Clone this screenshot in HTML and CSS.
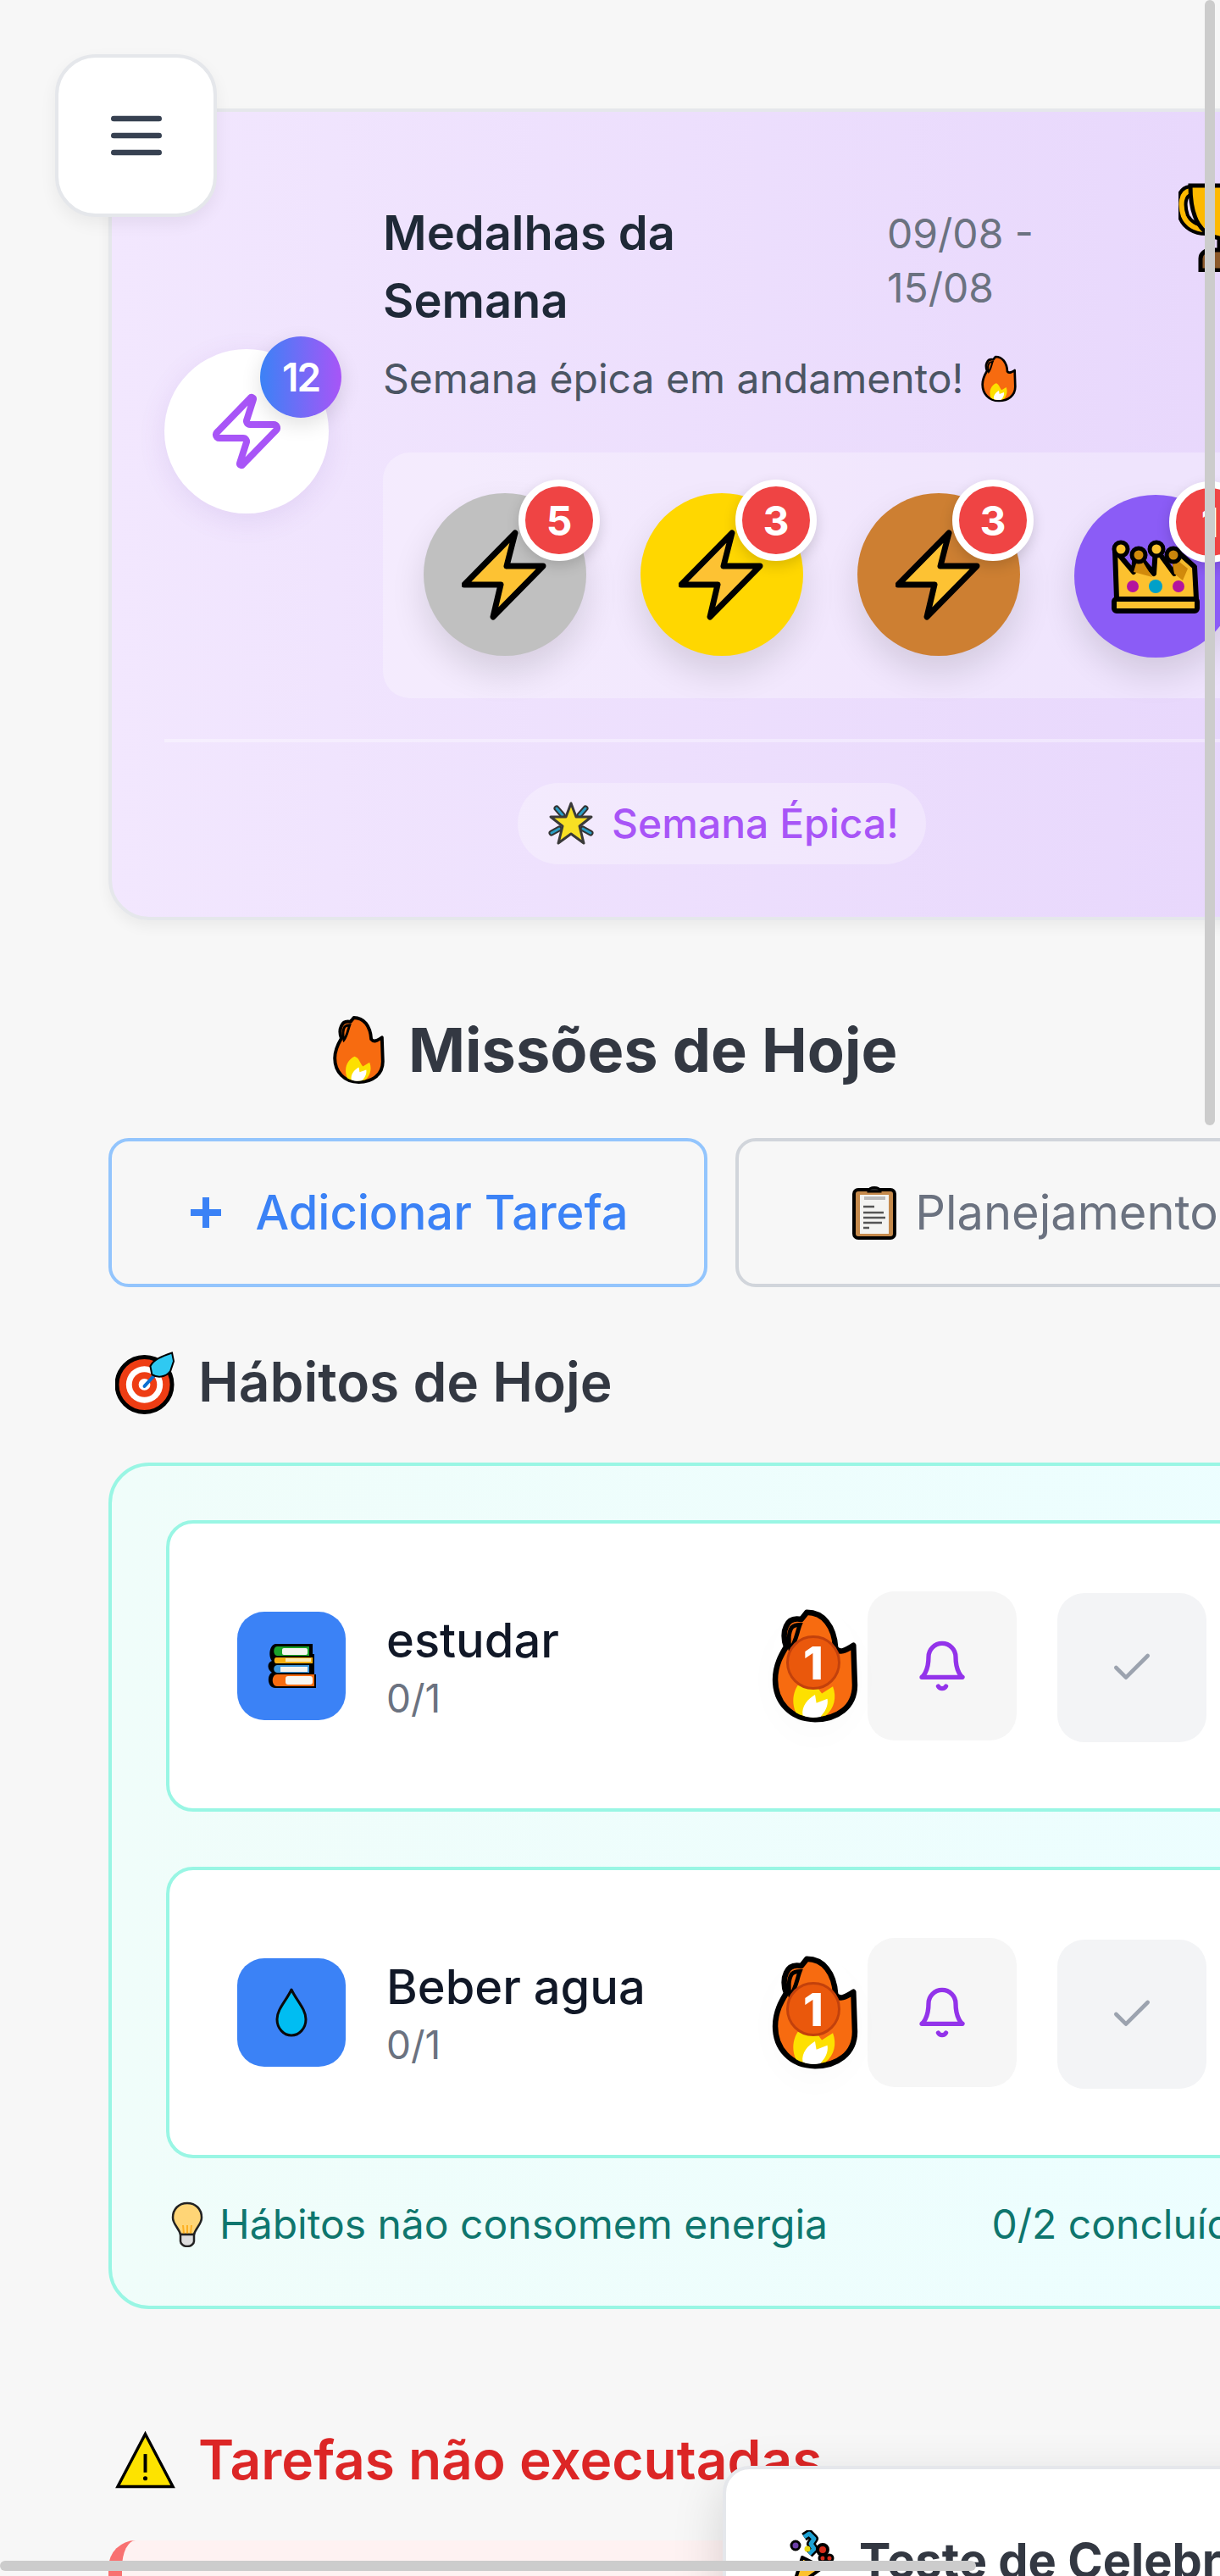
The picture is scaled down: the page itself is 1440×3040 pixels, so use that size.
FILE: index.html
```html
<!DOCTYPE html>
<html lang="pt-BR">
<head>
    <meta charset="UTF-8">
    <meta name="viewport" content="width=device-width, initial-scale=1.0">
    <title>Missões de Hoje</title>
    <link rel="stylesheet" href="styles.css">
</head>
<body>
    <svg class="sprite" aria-hidden="true">
        <symbol id="fire" viewBox="0 0 64 84">
            <path d="M26 3C38 3 46 13 47 29C50 33 54 31 60 27L61 56C61 72 48 81 32 81C14 81 3 68 3 52C3 41 8 33 11 28C9 23 9 17 11 13C13 8 17 7 22 8Z" fill="#f76b10" stroke="#000" stroke-width="4" stroke-linejoin="round"/>
            <path d="M14 30C12 24 13 17 15 14C17 12 19 12 21 12C19 17 18 25 14 30Z" fill="#f76b10" stroke="#000" stroke-width="3"/>
            <path d="M18 76C13 64 19 53 27 50C33 52 33 58 37 62L45 57C48 65 46 73 40 78C33 80 24 80 18 76Z" fill="#fde000"/>
            <path d="M23 78C22 71 27 66 32 63L33 69L41 66C42 71 39 76 36 79C32 80 27 80 23 78Z" fill="#fff"/>
        </symbol>
        <symbol id="bolt" viewBox="0 0 100 108">
            <path d="M63 5L53 44H96L37 104L46 66H3Z" fill="#fdc233" stroke="#000" stroke-width="7" stroke-linejoin="round"/>
        </symbol>
        <symbol id="trophy" viewBox="0 0 110 110">
            <path d="M14 14C2 16 2 32 6 44C10 54 20 60 32 60" fill="none" stroke="#000" stroke-width="14"/>
            <path d="M14 14C2 16 2 32 6 44C10 54 20 60 32 60" fill="none" stroke="#fdb900" stroke-width="6"/>
            <path d="M14 8H96C96 50 82 66 62 70V84H48V70C28 66 14 50 14 8Z" fill="#fdb900" stroke="#000" stroke-width="5"/>
            <path d="M26 108V94C26 88 32 84 38 84H72C78 84 84 88 84 94V108Z" fill="#8c5a2b" stroke="#000" stroke-width="5"/>
        </symbol>
        <symbol id="crown" viewBox="0 0 108 90">
            <path d="M8 72L6 14L28 40L30 16L52 42L54 12L76 42L80 16L100 34L102 72Z" fill="#fcc12f" stroke="#000" stroke-width="6" stroke-linejoin="round"/>
            <path d="M28 40L34 20L50 46ZM76 42L72 20L92 36L86 50Z" fill="#d18a0c"/>
            <circle cx="13" cy="13" r="8" fill="#fcc12f" stroke="#000" stroke-width="5"/>
            <circle cx="34" cy="20" r="8" fill="#d18a0c" stroke="#000" stroke-width="5"/>
            <circle cx="55" cy="13" r="8" fill="#fcc12f" stroke="#000" stroke-width="5"/>
            <circle cx="75" cy="20" r="8" fill="#d18a0c" stroke="#000" stroke-width="5"/>
            <circle cx="27" cy="57" r="7" fill="#b4149e"/>
            <circle cx="54" cy="57" r="8" fill="#00a0c8"/>
            <circle cx="81" cy="57" r="7" fill="#b4149e"/>
            <rect x="5" y="72" width="98" height="14" rx="3" fill="#fcc12f" stroke="#000" stroke-width="6"/>
        </symbol>
        <symbol id="star" viewBox="0 0 54 54">
            <path d="M10 9L17 17M44 9L37 17M4 38L13 33M50 38L41 33" stroke="#333" stroke-width="7" stroke-linecap="round"/>
            <path d="M10 9L17 17M44 9L37 17M4 38L13 33M50 38L41 33" stroke="#2a9dc4" stroke-width="3" stroke-linecap="round"/>
            <path d="M27 3L33 19H51L37 30L42 50L27 39L12 50L17 30L3 19H21Z" fill="#f8e023" stroke="#3a3a3a" stroke-width="3" stroke-linejoin="round"/>
        </symbol>
        <symbol id="clipboard" viewBox="0 0 54 66">
            <rect x="3" y="6" width="48" height="57" rx="5" fill="#c58a4c" stroke="#000" stroke-width="4"/>
            <rect x="10" y="12" width="34" height="46" fill="#f4f4f2"/>
            <path d="M20 8H34C34 2 20 2 20 8Z" fill="#333" stroke="#000" stroke-width="3"/>
            <path d="M15 16H40" stroke="#bbb" stroke-width="4"/>
            <path d="M14 26H27M14 33H38M14 39H40M14 45H36M14 51H21" stroke="#555" stroke-width="2.5"/>
        </symbol>
        <symbol id="target" viewBox="0 0 72 80">
            <circle cx="35" cy="43" r="33" fill="#ee3d14" stroke="#000" stroke-width="5"/>
            <circle cx="35" cy="43" r="22" fill="#fff"/>
            <circle cx="35" cy="43" r="15" fill="#ee3d14"/>
            <circle cx="35" cy="43" r="7" fill="#fff"/>
            <path d="M35 45L56 22" stroke="#0a6fd0" stroke-width="4" stroke-linecap="round"/>
            <path d="M42 21C46 13 56 9 68 5L70 15L66 27C60 35 50 35 44 31Z" fill="#2fc9f2" stroke="#000" stroke-width="2"/>
        </symbol>
        <symbol id="books" viewBox="0 0 58 56">
            <path d="M10 2H54V14H56V38H58V54H10C0 54 0 38 6 36C0 32 0 24 6 22C2 18 2 4 10 2Z" fill="#000"/>
            <path d="M12 5H50V16H12C7 16 7 5 12 5Z" fill="#1aa32a"/>
            <rect x="18" y="7" width="30" height="8" rx="2" fill="#f4f4f0"/>
            <path d="M11 18H54V25H11C8 25 8 18 11 18Z" fill="#f6ae11"/>
            <rect x="22" y="19" width="30" height="4" fill="#f9e9b9"/>
            <path d="M12 27H50V36H12C7 36 7 27 12 27Z" fill="#3b96dc"/>
            <rect x="16" y="29" width="32" height="6" fill="#f4f4f0"/>
            <path d="M12 38H56V52H12C5 52 5 38 12 38Z" fill="#f76b10"/>
            <rect x="22" y="40" width="32" height="10" rx="3" fill="#f7f7f2"/>
        </symbol>
        <symbol id="drop" viewBox="0 0 40 60">
            <path d="M20 3C26 16 37 26 37 38C37 49 29 57 20 57C11 57 3 49 3 38C3 26 14 16 20 3Z" fill="#00bdf2" stroke="#0a0a0a" stroke-width="3" stroke-linejoin="round"/>
        </symbol>
        <symbol id="bulb" viewBox="0 0 38 54">
            <path d="M19 2C9 2 2 9 2 19C2 27 9 31 11 39H27C29 31 36 27 36 19C36 9 29 2 19 2Z" fill="#ffd576" stroke="#222" stroke-width="2.5"/>
            <path d="M15 38L14 28M23 38L24 28M19 38V28" stroke="#fdb022" stroke-width="2"/>
            <path d="M11 39H27V47C27 50 23 53 19 53C15 53 11 50 11 47Z" fill="#ddd" stroke="#222" stroke-width="2.5"/>
        </symbol>
        <symbol id="warning" viewBox="0 0 72 70">
            <path d="M36 4L69 67H3Z" fill="#fde300" stroke="#000" stroke-width="3.5" stroke-linejoin="miter"/>
            <path d="M36 28V50" stroke="#000" stroke-width="4"/>
            <circle cx="36" cy="57" r="2.6" fill="#000"/>
        </symbol>
        <symbol id="popper" viewBox="0 0 64 72">
            <path d="M18 32L42 44L6 70Z" fill="#fdc12f" stroke="#000" stroke-width="4" stroke-linejoin="round"/>
            <path d="M20 8L26 4L32 10L28 16L32 22L26 28" fill="none" stroke="#000" stroke-width="10" stroke-linejoin="round"/>
            <path d="M20 8L26 4L32 10L28 16L32 22L26 28" fill="none" stroke="#1ea2d4" stroke-width="5" stroke-linejoin="round"/>
            <circle cx="10" cy="18" r="5" fill="#6b3fa8" stroke="#000" stroke-width="3"/>
            <circle cx="24" cy="22" r="3.5" fill="#e6d60e"/>
            <circle cx="42" cy="23" r="6" fill="#d62c1a" stroke="#000" stroke-width="4"/>
            <circle cx="42" cy="33" r="4" fill="#d62c1a" stroke="#000" stroke-width="3"/>
            <circle cx="50" cy="33" r="4" fill="#d62c1a" stroke="#000" stroke-width="3"/>
        </symbol>
    </svg>

    <div class="page">
        <section class="medals-card">
            <div class="medals-main">
                <div class="medals-icon">
                    <svg viewBox="0 0 24 24" class="zap-icon"><path d="M4 14a1 1 0 0 1-.78-1.63l9.9-10.2a.5.5 0 0 1 .86.46l-1.92 6.02A1 1 0 0 0 13 10h7a1 1 0 0 1 .78 1.63l-9.9 10.2a.5.5 0 0 1-.86-.46l1.92-6.02A1 1 0 0 0 11 14z"/></svg>
                    <span class="total-badge">12</span>
                </div>
                <div class="medals-body">
                    <div class="medals-head">
                        <h2 class="medals-title">Medalhas da Semana</h2>
                        <span class="medals-date">09/08 - 15/08</span>
                        <svg class="emoji trophy"><use href="#trophy"/></svg>
                    </div>
                    <p class="medals-sub">Semana épica em andamento! <svg class="emoji fire-sm"><use href="#fire"/></svg></p>
                    <div class="medal-row">
                        <div class="medal silver">
                            <svg class="emoji bolt"><use href="#bolt"/></svg>
                            <span class="medal-count">5</span>
                        </div>
                        <div class="medal gold">
                            <svg class="emoji bolt"><use href="#bolt"/></svg>
                            <span class="medal-count">3</span>
                        </div>
                        <div class="medal bronze">
                            <svg class="emoji bolt"><use href="#bolt"/></svg>
                            <span class="medal-count">3</span>
                        </div>
                        <div class="medal royal">
                            <svg class="emoji crown"><use href="#crown"/></svg>
                            <span class="medal-count">1</span>
                        </div>
                    </div>
                </div>
            </div>
            <div class="medals-foot">
                <span class="epic-pill"><svg class="emoji star"><use href="#star"/></svg>Semana Épica!</span>
            </div>
        </section>

        <h1 class="missions-title"><svg class="emoji fire-md"><use href="#fire"/></svg>Missões de Hoje</h1>

        <div class="action-row">
            <button class="action-btn add-btn">
                <svg viewBox="0 0 36 36" class="plus-icon"><path d="M18 0V36M0 18H36"/></svg>
                Adicionar Tarefa
            </button>
            <button class="action-btn plan-btn">
                <svg class="emoji clipboard"><use href="#clipboard"/></svg>
                Planejamento
            </button>
        </div>

        <h2 class="section-title"><svg class="emoji target"><use href="#target"/></svg>Hábitos de Hoje</h2>

        <section class="habits-panel">
            <div class="habit-card">
                <div class="habit-icon"><svg class="emoji books"><use href="#books"/></svg></div>
                <div class="habit-text">
                    <div class="habit-name">estudar</div>
                    <div class="habit-count">0/1</div>
                </div>
                <div class="streak">
                    <svg class="emoji fire-lg"><use href="#fire"/></svg>
                    <span class="streak-num">1</span>
                </div>
                <button class="square-btn bell-btn"><svg viewBox="0 0 24 24" class="bell-icon"><path d="M6 8a6 6 0 0 1 12 0c0 7 3 9 3 9H3s3-2 3-9"/><path d="M10.3 21a1.94 1.94 0 0 0 3.4 0"/></svg></button>
                <button class="square-btn check-btn"><svg viewBox="0 0 24 24" class="check-icon"><path d="M20 6 9 17l-5-5"/></svg></button>
            </div>
            <div class="habit-card">
                <div class="habit-icon"><svg class="emoji drop"><use href="#drop"/></svg></div>
                <div class="habit-text">
                    <div class="habit-name">Beber agua</div>
                    <div class="habit-count">0/1</div>
                </div>
                <div class="streak">
                    <svg class="emoji fire-lg"><use href="#fire"/></svg>
                    <span class="streak-num">1</span>
                </div>
                <button class="square-btn bell-btn"><svg viewBox="0 0 24 24" class="bell-icon"><path d="M6 8a6 6 0 0 1 12 0c0 7 3 9 3 9H3s3-2 3-9"/><path d="M10.3 21a1.94 1.94 0 0 0 3.4 0"/></svg></button>
                <button class="square-btn check-btn"><svg viewBox="0 0 24 24" class="check-icon"><path d="M20 6 9 17l-5-5"/></svg></button>
            </div>
            <div class="habits-foot">
                <span class="habits-note"><svg class="emoji bulb"><use href="#bulb"/></svg>Hábitos não consomem energia</span>
                <span>0/2 concluídos</span>
            </div>
        </section>

        <h2 class="section-title overdue-title"><svg class="emoji warning"><use href="#warning"/></svg>Tarefas não executadas</h2>
        <div class="overdue-card"></div>

        <button class="menu-btn"><svg viewBox="0 0 24 24" class="menu-icon"><path d="M4 6h16M4 12h16M4 18h16"/></svg></button>

        <aside class="test-panel">
            <h3 class="test-title"><svg class="emoji popper"><use href="#popper"/></svg>Teste de Celebração</h3>
        </aside>

        <div class="scroll-y"></div>
        <div class="scroll-x"></div>
    </div>
</body>
</html>
```

FILE: styles.css
```css
* {
    box-sizing: border-box;
}
body {
    margin: 0;
    font-family: 'Inter', 'Noto Sans', sans-serif;
    background-color: #f7f7f7;
}
h1, h2, h3, p {
    margin: 0;
}
button {
    font-family: inherit;
    padding: 0;
}
.sprite {
    display: none;
}
.emoji {
    display: block;
    flex: none;
}
.page {
    position: relative;
    width: 1440px;
    height: 3040px;
    padding: 128px 0 0 128px;
    overflow: hidden;
    background-color: #f7f7f7;
}

/* medals */
.medals-card {
    width: 1448px;
    padding: 62px;
    background: linear-gradient(90deg, #f2e7fe 0%, #e7d6fc 100%);
    border: 4px solid #e5e7eb;
    border-radius: 48px;
    box-shadow: 0 8px 16px rgba(0, 0, 0, 0.05);
}
.medals-main {
    display: flex;
    align-items: center;
    gap: 64px;
}
.medals-icon {
    position: relative;
    flex: none;
    display: flex;
    align-items: center;
    justify-content: center;
    width: 194px;
    height: 194px;
    background: white;
    border-radius: 50%;
    box-shadow: 0 8px 32px rgba(120, 80, 180, 0.12);
}
.zap-icon {
    width: 96px;
    height: 96px;
    fill: none;
    stroke: #a855f7;
    stroke-width: 2;
    stroke-linecap: round;
    stroke-linejoin: round;
}
.total-badge {
    position: absolute;
    top: -15px;
    right: -15px;
    width: 96px;
    height: 96px;
    display: flex;
    align-items: center;
    justify-content: center;
    color: white;
    font-size: 46px;
    font-weight: 600;
    letter-spacing: -2px;
    background: linear-gradient(90deg, #3b82f6, #a855f7);
    border-radius: 50%;
    box-shadow: 0 8px 24px rgba(0, 0, 0, 0.12);
}
.medals-body {
    flex: none;
    width: 1200px;
}
.medals-head {
    display: flex;
    align-items: flex-start;
}
.medals-title {
    flex: none;
    width: 596px;
    padding-right: 220px;
    margin-top: 41px;
    font-size: 56px;
    line-height: 80px;
    font-weight: 600;
    color: #1f2937;
}
.medals-date {
    flex: none;
    width: 200px;
    margin-top: 50px;
    margin-left: -1px;
    font-size: 48px;
    line-height: 64px;
    color: #6b7280;
}
.trophy {
    width: 110px;
    height: 110px;
    margin: 17px 0 0 144px;
}
.medals-sub {
    margin-top: 20px;
    font-size: 48px;
    line-height: 64px;
    color: #4b5563;
}
.fire-sm {
    display: inline-block;
    width: 44px;
    height: 56px;
    margin-left: 6px;
    vertical-align: -11px;
}
.medal-row {
    display: flex;
    gap: 64px;
    margin-top: 55px;
    padding: 48px;
    background: rgba(255, 255, 255, 0.3);
    border-radius: 32px;
}
.medal {
    position: relative;
    flex: none;
    display: flex;
    align-items: center;
    justify-content: center;
    width: 192px;
    height: 192px;
    border-radius: 50%;
    box-shadow: 0 20px 40px rgba(0, 0, 0, 0.12);
}
.silver { background-color: #c0c0c0; }
.gold { background-color: #ffd700; }
.bronze { background-color: #cd7f32; }
.royal {
    background-color: #8b5cf6;
    margin-top: 2px;
}
.bolt {
    width: 100px;
    height: 108px;
    margin-left: -2px;
}
.crown {
    width: 108px;
    height: 90px;
}
.medal-count {
    position: absolute;
    top: -16px;
    right: -16px;
    width: 96px;
    height: 96px;
    display: flex;
    align-items: center;
    justify-content: center;
    color: white;
    font-size: 48px;
    font-weight: 700;
    background-color: #ef4444;
    border: 8px solid white;
    border-radius: 50%;
    box-shadow: 0 6px 16px rgba(0, 0, 0, 0.15);
}
.medals-foot {
    display: flex;
    justify-content: center;
    margin-top: 48px;
    padding-top: 48px;
    border-top: 4px solid rgba(255, 255, 255, 0.35);
}
.epic-pill {
    display: flex;
    align-items: center;
    gap: 21px;
    padding: 16px 32px 16px 36px;
    font-size: 48px;
    line-height: 64px;
    font-weight: 500;
    color: #a855f7;
    background: rgba(255, 255, 255, 0.3);
    border-radius: 48px;
}
.star {
    width: 54px;
    height: 54px;
}

/* missions */
.missions-title {
    display: flex;
    align-items: center;
    gap: 27px;
    margin: 105px 0 56px 264px;
    font-size: 72px;
    line-height: 96px;
    font-weight: 700;
    color: #333842;
}
.fire-md {
    width: 63px;
    height: 82px;
}
.action-row {
    display: flex;
    gap: 33px;
    width: 1448px;
}
.action-btn {
    flex: 0 0 707px;
    display: flex;
    align-items: center;
    justify-content: center;
    gap: 40px;
    height: 176px;
    font-size: 56px;
    font-weight: 500;
    background: transparent;
    border: 4px solid;
    border-radius: 24px;
}
.add-btn {
    padding-left: 4px;
    color: #3b82f6;
    border-color: #93c5fd;
}
.plus-icon {
    width: 36px;
    height: 36px;
    stroke: #3b82f6;
    stroke-width: 8;
}
.plan-btn {
    gap: 21px;
    font-weight: 400;
    color: #6b7280;
    border-color: #d1d5db;
}
.clipboard {
    width: 54px;
    height: 66px;
}
.section-title {
    display: flex;
    align-items: center;
    gap: 27px;
    margin: 68px 0 51px 8px;
    font-size: 64px;
    line-height: 88px;
    font-weight: 600;
    color: #333842;
}
.target {
    width: 71px;
    height: 80px;
}

/* habits */
.habits-panel {
    width: 1448px;
    padding: 64px;
    background: linear-gradient(90deg, #f0fdfa, #ecfeff);
    border: 4px solid #99f6e4;
    border-radius: 48px;
}
.habit-card {
    display: flex;
    align-items: center;
    padding: 78px 80px;
    margin-bottom: 65px;
    background: white;
    border: 4px solid #99f6e4;
    border-radius: 32px;
}
.habit-card + .habit-card {
    margin-bottom: 46px;
}
.habit-icon {
    flex: none;
    display: flex;
    align-items: center;
    justify-content: center;
    width: 128px;
    height: 128px;
    background-color: #3b82f6;
    border-radius: 32px;
}
.books {
    width: 58px;
    height: 56px;
}
.drop {
    width: 40px;
    height: 60px;
}
.habit-text {
    flex: 1;
    margin-left: 48px;
}
.habit-name {
    font-size: 56px;
    line-height: 80px;
    font-weight: 500;
    color: #111827;
}
.habit-count {
    margin-top: -4px;
    font-size: 46px;
    line-height: 64px;
    color: #6b7280;
}
.streak {
    position: relative;
    flex: none;
    width: 104px;
    height: 136px;
    margin-right: 10px;
    border-radius: 50%;
    box-shadow: 0 16px 40px rgba(0, 0, 0, 0.02);
}
.fire-lg {
    width: 104px;
    height: 136px;
}
.streak-num {
    position: absolute;
    top: 32px;
    left: 18px;
    width: 64px;
    height: 64px;
    display: flex;
    align-items: center;
    justify-content: center;
    color: white;
    font-size: 54px;
    font-weight: 800;
    background-color: #ea580c;
    border: 3px solid #c2410c;
    border-radius: 50%;
}
.square-btn {
    flex: none;
    display: flex;
    align-items: center;
    justify-content: center;
    width: 176px;
    height: 176px;
    border: none;
    border-radius: 32px;
}
.bell-btn {
    background-color: #f6f6f6;
}
.check-btn {
    margin: 4px 0 0 48px;
    background-color: #f3f4f6;
}
.bell-icon {
    width: 64px;
    height: 64px;
    fill: none;
    stroke: #9333ea;
    stroke-width: 2;
    stroke-linecap: round;
    stroke-linejoin: round;
}
.check-icon {
    width: 56px;
    height: 56px;
    fill: none;
    stroke: #9ca3af;
    stroke-width: 2;
    stroke-linecap: round;
    stroke-linejoin: round;
}
.habits-foot {
    display: flex;
    justify-content: space-between;
    font-size: 48px;
    line-height: 64px;
    color: #0f766e;
    white-space: nowrap;
}
.habits-note {
    display: flex;
    align-items: center;
    gap: 19px;
    margin-left: 6px;
}
.bulb {
    width: 38px;
    height: 54px;
}

/* overdue */
.overdue-title {
    margin: 134px 0 51px 8px;
    color: #dc2626;
}
.warning {
    width: 71px;
    height: 70px;
}
.overdue-card {
    width: 1448px;
    height: 300px;
    background-color: #fef2f2;
    border-left: 16px solid #f87171;
    border-radius: 32px;
}

/* floating bits */
.menu-btn {
    position: absolute;
    top: 64px;
    left: 65px;
    width: 191px;
    height: 192px;
    display: flex;
    align-items: center;
    justify-content: center;
    background: white;
    border: 4px solid #e5e7eb;
    border-radius: 48px;
    box-shadow: 0 8px 20px rgba(0, 0, 0, 0.06);
}
.menu-icon {
    width: 80px;
    height: 80px;
    fill: none;
    stroke: #374151;
    stroke-width: 2;
    stroke-linecap: round;
}
.test-panel {
    position: absolute;
    top: 2910px;
    left: 853px;
    width: 800px;
    height: 400px;
    padding: 72px 0 0 72px;
    background: white;
    border: 4px solid #e5e7eb;
    border-radius: 32px;
    box-shadow: 0 20px 60px rgba(0, 0, 0, 0.15);
}
.test-title {
    display: flex;
    align-items: center;
    gap: 21px;
    font-size: 56px;
    line-height: 72px;
    font-weight: 700;
    color: #333842;
    white-space: nowrap;
}
.popper {
    width: 64px;
    height: 72px;
}
.scroll-y {
    position: absolute;
    top: 0;
    left: 1422px;
    width: 12px;
    height: 1328px;
    background-color: #ccc;
    border-radius: 6px;
}
.scroll-x {
    position: absolute;
    top: 3022px;
    left: 0;
    width: 1152px;
    height: 12px;
    background-color: #ccc;
    border-radius: 6px;
}
```
